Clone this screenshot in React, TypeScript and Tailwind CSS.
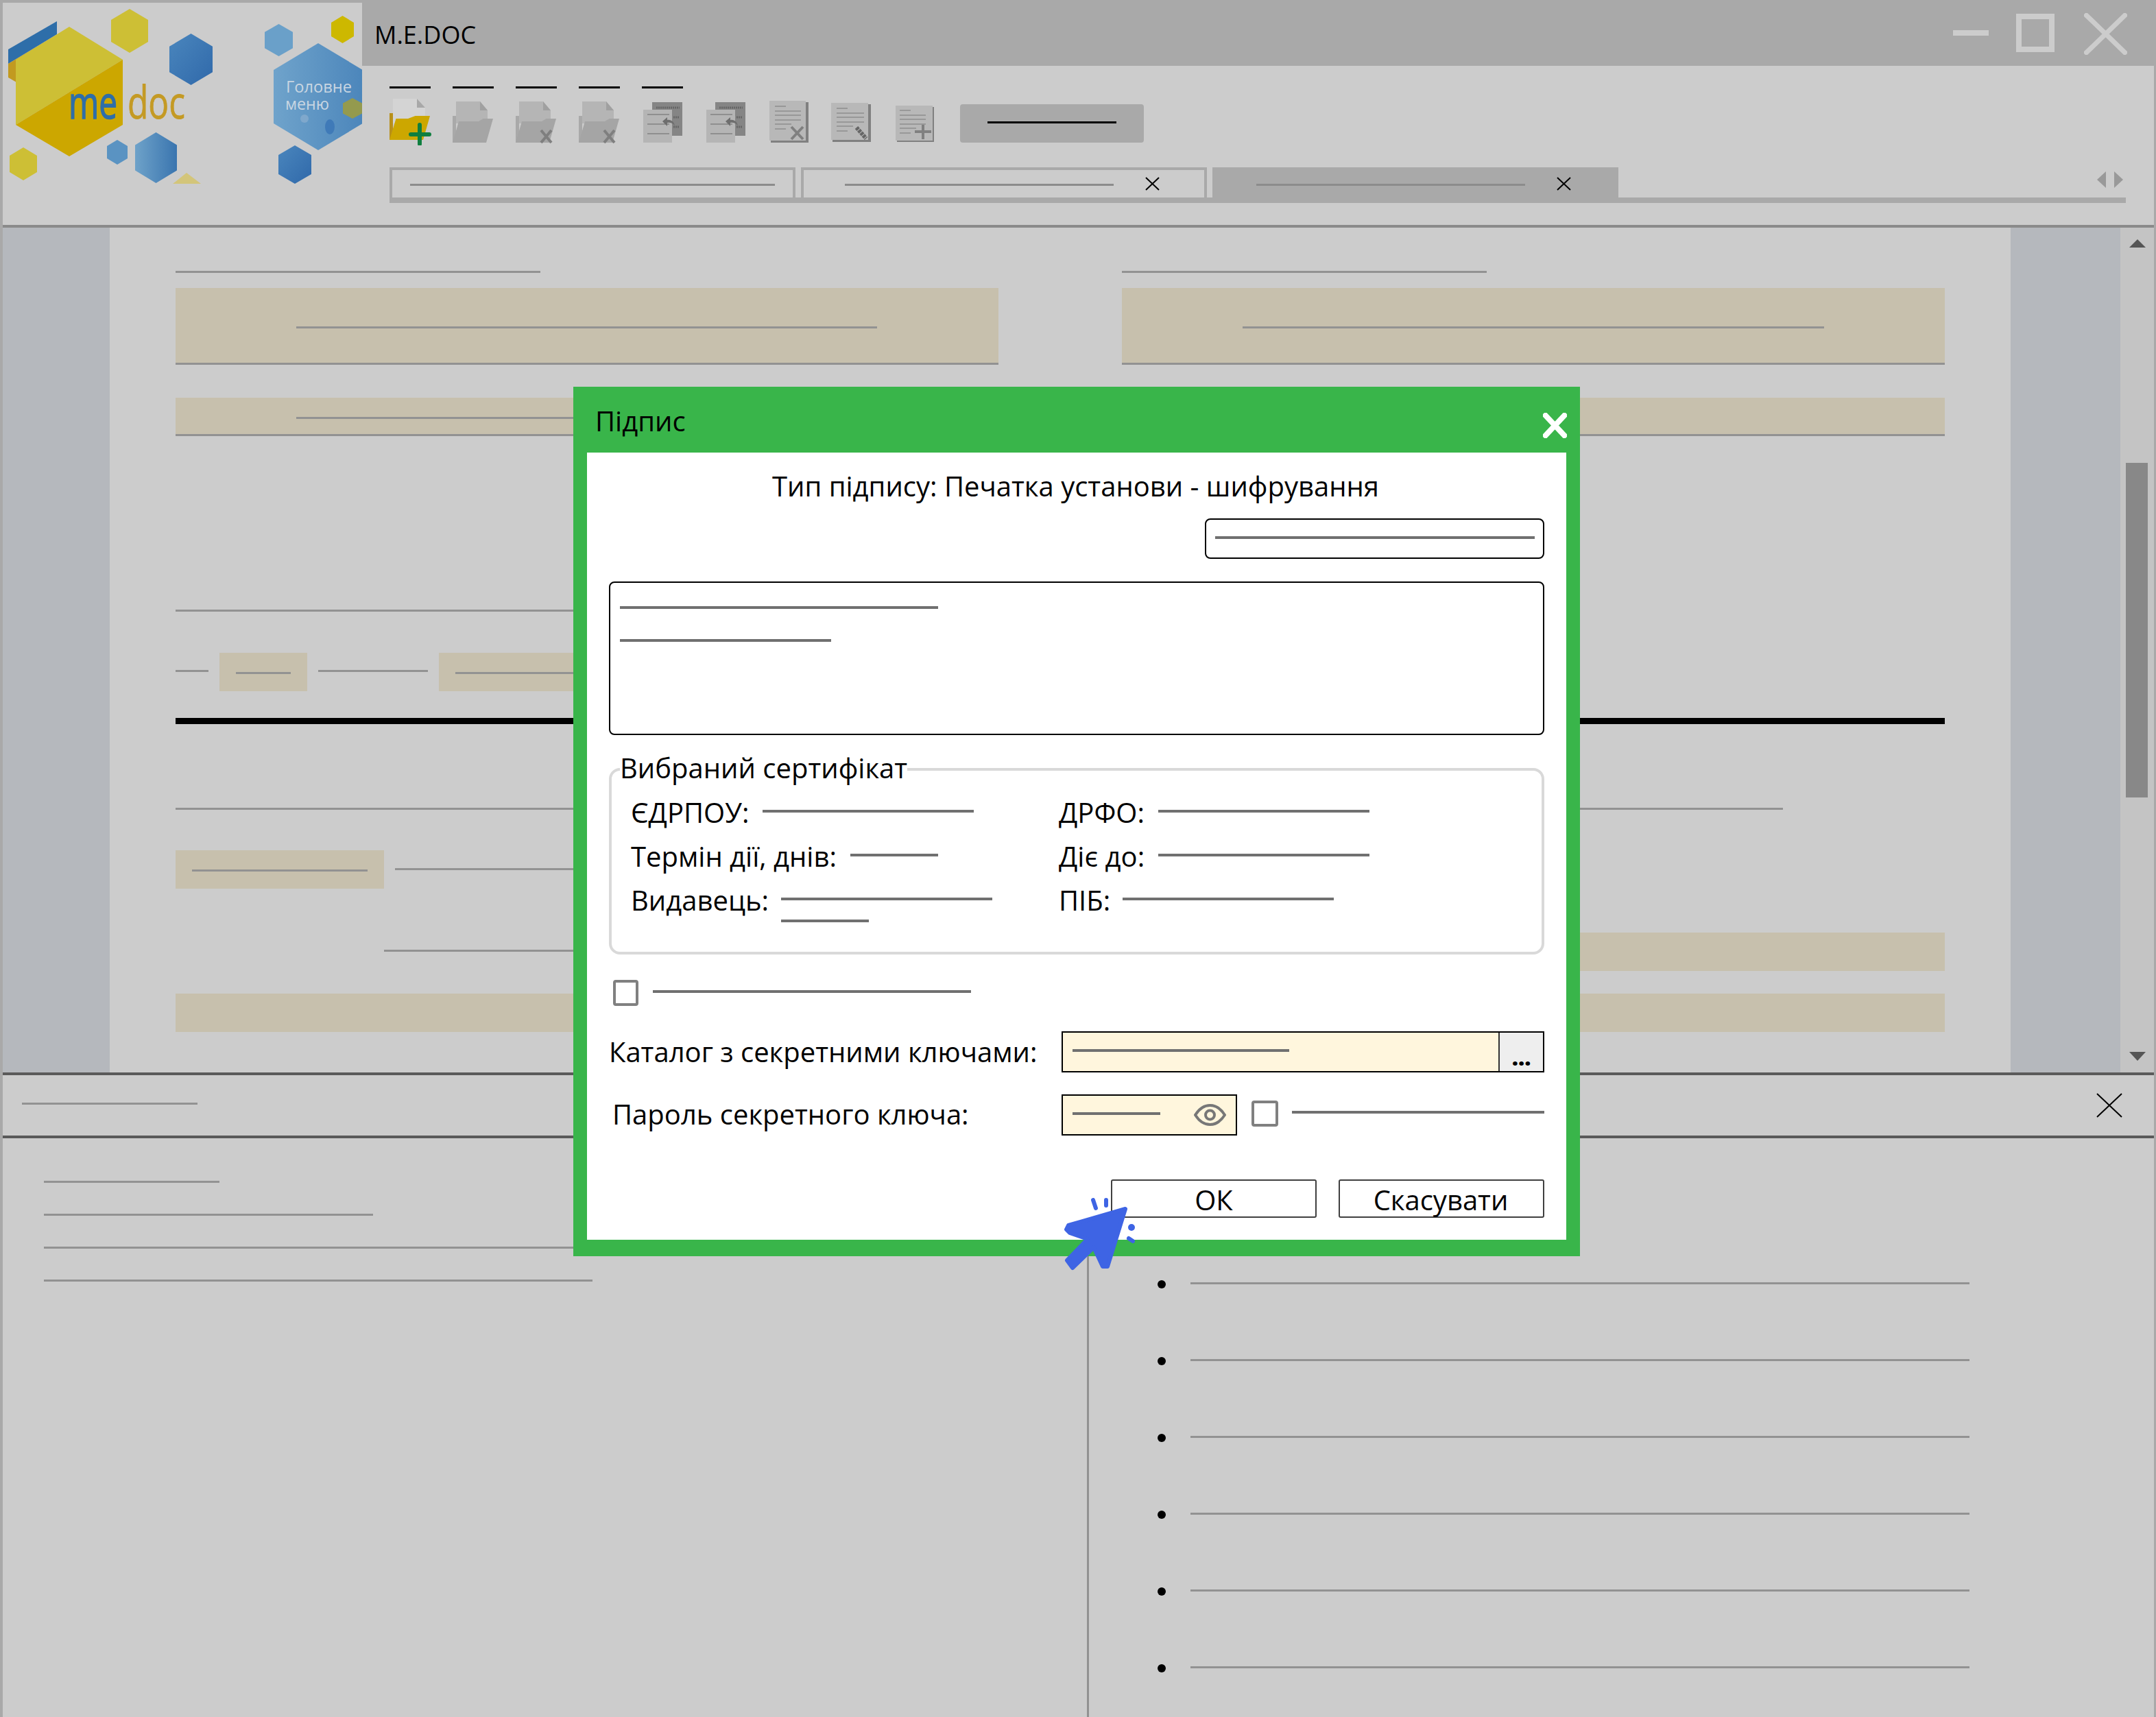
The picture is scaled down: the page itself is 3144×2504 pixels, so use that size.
import React from 'react';

function DocLine({ className = '' }: { className?: string }) {
  return <div className={`h-[3px] shrink-0 bg-[#929292] ${className}`} />;
}

function FormLine({ className = '' }: { className?: string }) {
  return <div className={`h-[4px] shrink-0 bg-[#707070] ${className}`} />;
}

function Cross({ width, height, color, stroke, className = '' }: { width: number; height: number; color: string; stroke: number; className?: string }) {
  return (
    <svg width={width} height={height} viewBox={`0 0 ${width} ${height}`} className={`shrink-0 ${className}`}>
      <path d={`M1 1 L${width - 1} ${height - 1} M${width - 1} 1 L1 ${height - 1}`} stroke={color} strokeWidth={stroke} fill="none" />
    </svg>
  );
}

function Hex({ x1, x2, y1, y2, fill }: { x1: number; x2: number; y1: number; y2: number; fill: string }) {
  const mx = (x1 + x2) / 2;
  const d = (y2 - y1) / 4;
  return <polygon points={`${mx},${y1} ${x2},${y1 + d} ${x2},${y2 - d} ${mx},${y2} ${x1},${y2 - d} ${x1},${y1 + d}`} fill={fill} />;
}

function Logo() {
  return (
    <svg width="524" height="324" viewBox="4 4 524 324" className="block">
      <defs>
        <linearGradient id="blueA" x1="0" y1="0" x2="1" y2="1">
          <stop offset="0" stopColor="#4a86bd" />
          <stop offset="1" stopColor="#3069aa" />
        </linearGradient>
        <linearGradient id="blueB" x1="0" y1="0" x2="1" y2="0">
          <stop offset="0" stopColor="#6ea2c9" />
          <stop offset="1" stopColor="#3a75af" />
        </linearGradient>
        <linearGradient id="blueC" x1="0" y1="0" x2="1" y2="0">
          <stop offset="0" stopColor="#6fa3cb" />
          <stop offset="1" stopColor="#4c86bb" />
        </linearGradient>
      </defs>
      <polygon points="83,31 83,50 12,93 12,72" fill="#2e6ea9" />
      <polygon points="84,50 84,72 24,106 24,120 12,113 12,93" fill="#c29a20" />
      <polygon points="101,39 179,87 23,182 23,87" fill="#cdbf35" />
      <polygon points="179,87 179,182 101,228 23,182" fill="#cca700" />
      <Hex x1={162} x2={216} y1={13} y2={77} fill="#cdbf35" />
      <Hex x1={247} x2={310} y1={49} y2={124} fill="url(#blueA)" />
      <Hex x1={14} x2={54} y1={215} y2={263} fill="#cdbf35" />
      <Hex x1={156} x2={186} y1={204} y2={240} fill="#5a93c2" />
      <Hex x1={197} x2={258} y1={193} y2={267} fill="url(#blueB)" />
      <polygon points="252,268 272,252 293,268" fill="#d3c57a" />
      <text x="100" y="173" fontSize="65" textLength="71" lengthAdjust="spacingAndGlyphs" fill="#2e6ea9" stroke="#2e6ea9" strokeWidth="1.5">me</text>
      <text x="186" y="173" fontSize="65" textLength="84" lengthAdjust="spacingAndGlyphs" fill="#c49a24" stroke="#c49a24" strokeWidth="0.8">doc</text>
      <Hex x1={386} x2={427} y1={35} y2={82} fill="#6aa0c9" />
      <Hex x1={483} x2={516} y1={23} y2={63} fill="#cdb800" />
      <Hex x1={399} x2={529} y1={63} y2={219} fill="url(#blueC)" />
      <Hex x1={500} x2={528} y1={143} y2={173} fill="#949a4e" />
      <circle cx="444" cy="173" r="6" fill="#7fa8cc" />
      <ellipse cx="481" cy="185" rx="7" ry="11" fill="#3f7ab8" />
      <Hex x1={406} x2={454} y1={212} y2={268} fill="url(#blueA)" />
      <text x="417" y="135" fontSize="24" textLength="96" lengthAdjust="spacingAndGlyphs" fill="#c9d6e2">Головне</text>
      <text x="416" y="160" fontSize="24" textLength="64" lengthAdjust="spacingAndGlyphs" fill="#c9d6e2">меню</text>
    </svg>
  );
}

function FolderNew() {
  return (
    <svg width="92" height="72" viewBox="0 0 92 72" className="shrink-0">
      <path d="M5 4 H40 L52 17 V40 H5 Z" fill="#d4d4d4" />
      <path d="M40 4 L52 17 H40 Z" fill="#a8a8a8" />
      <rect x="0" y="25" width="5" height="39" fill="#b8901a" />
      <polygon points="9.5,33 27,33 37.6,29 59,29 49,64 0,64" fill="#cca700" />
      <path d="M44 42 V70 M31 56 H58" stroke="#0f7f3f" strokeWidth="6" strokeLinecap="round" fill="none" />
    </svg>
  );
}

function FolderGray({ cross = false }: { cross?: boolean }) {
  return (
    <svg width="92" height="72" viewBox="0 0 92 72" className="shrink-0">
      <path d="M5 8 H40 L51 21 V40 H5 Z" fill="#b5b5b5" />
      <path d="M40 8 L51 21 H40 Z" fill="#a0a0a0" />
      <rect x="0" y="29" width="5" height="39" fill="#a9a9a9" />
      <polygon points="9,37 38,37 44.6,33 59,33 49,68 0,68" fill="#a5a5a5" />
      {cross && <path d="M37 50 L52 68 M52 50 L37 68" stroke="#7f7f7f" strokeWidth="4" fill="none" />}
    </svg>
  );
}

function PagesBack() {
  return (
    <svg width="92" height="72" viewBox="0 0 92 72" className="shrink-0">
      <rect x="15" y="9" width="44" height="49" fill="#858585" />
      <path d="M21 17 H55 M46 31 H55 M46 45 H55" stroke="#666666" strokeWidth="3" strokeDasharray="2 1" fill="none" />
      <rect x="2" y="20" width="42" height="48" fill="#b5b5b5" />
      <path d="M8 27 H40 M8 41 H40 M8 55 H40" stroke="#8f8f8f" strokeWidth="2" fill="none" />
      <path d="M30 37 L37 31 L37 35 C43 34 47 38 48 43 C44 39 41 38 37 39 L37 44 Z" fill="#6e6e6e" />
    </svg>
  );
}

function SheetLines({ x, y, w }: { x: number; y: number; w: number }) {
  return (
    <path
      d={`M${x} ${y} H${x + 16} M${x} ${y + 7} H${x + w} M${x} ${y + 13} H${x + w} M${x} ${y + 20} H${x + w} M${x} ${y + 26} H${x + 24} M${x} ${y + 33} H${x + 16}`}
      stroke="#989898"
      strokeWidth="2"
      fill="none"
    />
  );
}

function SheetCross() {
  return (
    <svg width="90" height="72" viewBox="0 0 90 72" className="shrink-0">
      <rect x="4" y="9" width="55" height="59" fill="#808080" />
      <rect x="2" y="7" width="53" height="58" fill="#b8b8b8" />
      <SheetLines x={10} y={15} w={38} />
      <path d="M34 45 L51 63 M51 45 L34 63" stroke="#808080" strokeWidth="4" fill="none" />
    </svg>
  );
}

function SheetPencil() {
  return (
    <svg width="92" height="72" viewBox="0 0 92 72" className="shrink-0">
      <rect x="2" y="12" width="56" height="55" fill="#808080" />
      <rect x="0" y="10" width="54" height="54" fill="#b8b8b8" />
      <SheetLines x={8} y={18} w={40} />
      <path d="M37 46 L51 62" stroke="#666666" strokeWidth="6" strokeDasharray="4 1" fill="none" />
    </svg>
  );
}

function SheetPlus() {
  return (
    <svg width="92" height="72" viewBox="0 0 92 72" className="shrink-0">
      <rect x="4" y="16" width="54" height="51" fill="#808080" />
      <rect x="2" y="14" width="54" height="51" fill="#b8b8b8" />
      <SheetLines x={8} y={21} w={38} />
      <path d="M42 42 V63 M30 52 H54" stroke="#808080" strokeWidth="4" fill="none" />
    </svg>
  );
}

function EyeIcon() {
  return (
    <svg width="47" height="32" viewBox="0 0 47 32" className="shrink-0 self-center">
      <path d="M2 16 C9 5 16 2 23.5 2 S38 5 45 16 C38 27 31 30 23.5 30 S9 27 2 16 Z" stroke="#777777" strokeWidth="4" fill="none" />
      <circle cx="23.5" cy="16" r="6.5" stroke="#777777" strokeWidth="4" fill="none" />
    </svg>
  );
}

function ClickCursor() {
  return (
    <svg width="110" height="108" viewBox="0 0 110 108" className="absolute left-[1551px] top-[1747px]">
      <polygon
        points="90,16 7,40 4,46 9,51 35,60 5,91 13,102 44,72 57,100 64,100"
        fill="#3e64e4"
        stroke="#3e64e4"
        strokeWidth="6"
        strokeLinejoin="round"
      />
      <path d="M43 3 L47 15 M62 3 V11 M95 59 L101 63" stroke="#3e64e4" strokeWidth="6" strokeLinecap="round" fill="none" />
      <circle cx="99" cy="43" r="5" fill="#3e64e4" />
    </svg>
  );
}

function Tab({ active = false, closable = true, lineClass }: { active?: boolean; closable?: boolean; lineClass: string }) {
  return (
    <div className={`flex h-[44px] w-[592px] items-start ${active ? 'bg-[#a9a9a9]' : 'border-x-4 border-t-4 border-[#a9a9a9]'}`}>
      <div className={`h-[3px] bg-[#8c8c8c] ${lineClass}`} />
      {closable && <Cross width={21} height={20} color="#000000" stroke={2} className={active ? 'ml-[46px] mt-[14px]' : 'ml-[46px] mt-[10px]'} />}
    </div>
  );
}

function Titlebar() {
  return (
    <div className="flex h-[96px] shrink-0 items-start justify-between">
      <div className="pl-[18px] pt-[26px] text-[36px] leading-[50px] text-black">M.E.DOC</div>
      <div className="flex items-start pr-[39px] pt-[19px]">
        <div className="mt-[25px] h-[8px] w-[52px] bg-[#cccccc]" />
        <div className="ml-[40px] mt-[1px] h-[56px] w-[56px] border-[8px] border-[#cccccc]" />
        <Cross width={63} height={61} color="#cccccc" stroke={7} className="ml-[43px]" />
      </div>
    </div>
  );
}

function Toolbar() {
  return (
    <div className="flex flex-1 flex-col bg-[#cccccc] pl-[40px]">
      <div className="flex gap-[32px] pt-[30px]">
        <div className="h-[3px] w-[60px] bg-black" />
        <div className="h-[3px] w-[60px] bg-black" />
        <div className="h-[3px] w-[60px] bg-black" />
        <div className="h-[3px] w-[60px] bg-black" />
        <div className="h-[3px] w-[60px] bg-black" />
      </div>
      <div className="mt-[11px] flex h-[72px] items-start">
        <FolderNew />
        <FolderGray />
        <FolderGray cross />
        <FolderGray cross />
        <PagesBack />
        <PagesBack />
        <div className="w-[92px]"><SheetCross /></div>
        <SheetPencil />
        <SheetPlus />
        <div className="ml-[4px] mt-[12px] flex h-[56px] w-[268px] items-center justify-center rounded-[4px] bg-[#a9a9a9]">
          <div className="mb-[3px] h-[3px] w-[188px] bg-black" />
        </div>
      </div>
      <div className="mt-[32px] flex h-[44px] w-[2532px] gap-[8px]">
        <Tab closable={false} lineClass="ml-[26px] mt-[20px] w-[532px]" />
        <Tab lineClass="ml-[60px] mt-[20px] w-[392px]" />
        <Tab active lineClass="ml-[64px] mt-[24px] w-[392px]" />
        <svg width="38" height="24" viewBox="0 0 38 24" className="ml-auto mr-[4px] mt-[6px]">
          <polygon points="13,0 0,12 13,24" fill="#999999" />
          <polygon points="25,0 38,12 25,24" fill="#999999" />
        </svg>
      </div>
      <div className="h-[8px] w-[2532px] bg-[#a9a9a9]" />
    </div>
  );
}

function TanRow({ className = '', children }: { className?: string; children?: React.ReactNode }) {
  return <div className={`shrink-0 bg-[#c7c0ad] ${className}`}>{children}</div>;
}

function Document() {
  return (
    <div className="flex h-[1236px] shrink-0 overflow-hidden border-b-4 border-[#5a5a5a]">
      <div className="w-[156px] bg-[#b5b8bd]" />
      <div className="flex-1 bg-[#cccccc] px-[96px] pt-[63px]">
        <div className="flex gap-[180px]">
          <div className="w-[1200px]">
            <DocLine className="w-[532px]" />
            <TanRow className="mt-[22px] h-[112px] border-b-[3px] border-[#929292] pl-[176px] pt-[56px]">
              <DocLine className="w-[847px]" />
            </TanRow>
            <TanRow className="mt-[48px] h-[56px] border-b-[3px] border-[#929292] pl-[176px] pt-[28px]">
              <DocLine className="w-[847px]" />
            </TanRow>
          </div>
          <div className="w-[1200px]">
            <DocLine className="w-[532px]" />
            <TanRow className="mt-[22px] h-[112px] border-b-[3px] border-[#929292] pl-[176px] pt-[56px]">
              <DocLine className="w-[848px]" />
            </TanRow>
            <TanRow className="mt-[48px] h-[56px] border-b-[3px] border-[#929292]" />
          </div>
        </div>
        <DocLine className="mt-[253px] w-[1200px]" />
        <div className="mt-[60px] flex h-[56px] items-start">
          <DocLine className="mt-[25px] w-[48px]" />
          <TanRow className="ml-[16px] h-[56px] w-[128px] pl-[24px] pt-[28px]"><DocLine className="w-[80px]" /></TanRow>
          <DocLine className="ml-[16px] mt-[25px] w-[160px]" />
          <TanRow className="ml-[16px] h-[56px] w-[800px] pl-[24px] pt-[28px]"><DocLine className="w-[700px]" /></TanRow>
        </div>
        <div className="mt-[39px] h-[9px] w-full bg-black" />
        <DocLine className="mt-[122px] w-[2344px]" />
        <div className="mt-[59px] flex h-[56px] items-start">
          <TanRow className="h-[56px] w-[304px] pl-[24px] pt-[28px]"><DocLine className="w-[256px]" /></TanRow>
          <DocLine className="ml-[16px] mt-[26px] w-[800px]" />
        </div>
        <div className="mt-[64px] flex h-[56px] items-start justify-between">
          <DocLine className="ml-[304px] mt-[25px] w-[400px]" />
          <TanRow className="h-[56px] w-[1000px]" />
        </div>
        <TanRow className="mt-[33px] h-[56px] w-full" />
      </div>
      <div className="w-[160px] bg-[#b5b8bd]" />
      <div className="relative flex w-[49px] flex-col items-center bg-[#c4c4c4]">
        <svg width="24" height="12" viewBox="0 0 24 12" className="mt-[17px]"><polygon points="12,0 24,12 0,12" fill="#555555" /></svg>
        <div className="ml-[-2px] mt-[314px] h-[488px] w-[32px] bg-[#888888]" />
        <svg width="24" height="13" viewBox="0 0 24 13" className="mt-[371px]"><polygon points="0,0 24,0 12,13" fill="#555555" /></svg>
      </div>
    </div>
  );
}

function BottomPanel() {
  return (
    <div className="flex flex-1 flex-col bg-[#cccccc]">
      <div className="flex h-[92px] shrink-0 items-start justify-between border-b-4 border-[#5a5a5a] pl-[28px] pr-[46px]">
        <DocLine className="mt-[40px] w-[256px]" />
        <Cross width={38} height={36} color="#000000" stroke={2} className="mt-[26px]" />
      </div>
      <div className="flex flex-1">
        <div className="flex w-[1581px] flex-col gap-[45px] pl-[60px] pt-[62px]">
          <DocLine className="w-[256px]" />
          <DocLine className="w-[480px]" />
          <DocLine className="w-[800px]" />
          <DocLine className="w-[800px]" />
        </div>
        <div className="flex flex-1 flex-col border-l-[3px] border-[#929292] pl-[100px] pt-[207px]">
          {[0, 1, 2, 3, 4, 5].map(i => (
            <div key={i} className="flex h-[112px] items-start">
              <div className="h-[12px] w-[12px] rounded-full bg-black" />
              <DocLine className="ml-[36px] mt-[3px] w-[1136px]" />
            </div>
          ))}
        </div>
      </div>
    </div>
  );
}

function CertRow({ label, gap = 'gap-[20px]', children }: { label: string; gap?: string; children: React.ReactNode }) {
  return (
    <div className={`flex h-[56px] items-start ${gap}`}>
      <span className="whitespace-nowrap">{label}</span>
      {children}
    </div>
  );
}

function SignDialog() {
  return (
    <div className="absolute left-[836px] top-[564px] flex h-[1268px] w-[1468px] flex-col bg-[#39b54a] px-[20px] pb-[24px] text-[40px] leading-[56px] text-black">
      <div className="flex h-[96px] shrink-0 items-start justify-between">
        <span className="mt-[22px] pl-[12px]">Підпис</span>
        <Cross width={35} height={37} color="#ffffff" stroke={8} className="mr-[-1px] mt-[38px]" />
      </div>
      <div className="flex flex-1 flex-col bg-white pl-[32px] pr-[32px] pt-[21px]">
        <div className="h-[56px] pr-[3px] text-center">Тип підпису: Печатка установи - шифрування</div>
        <div className="mt-[19px] flex h-[59px] w-[495px] items-center self-end rounded-[8px] border-2 border-black pl-[13px] pr-[12px]">
          <FormLine className="mb-[3px] w-full" />
        </div>
        <div className="mt-[33px] flex h-[224px] flex-col rounded-[8px] border-2 border-black pl-[14px] pt-[34px]">
          <FormLine className="w-[464px]" />
          <FormLine className="mt-[44px] w-[308px]" />
        </div>
        <fieldset className="mt-[20px] h-[300px] rounded-[16px] border-4 border-[#d9d9d9] pl-[28px]">
          <legend className="ml-[-16px] pb-[4px]">Вибраний сертифікат</legend>
          <div className="flex pt-[5px]">
            <div className="flex w-[624px] flex-col gap-[8px]">
              <CertRow label="ЄДРПОУ:"><FormLine className="mt-[24px] w-[308px]" /></CertRow>
              <CertRow label="Термін дії, днів:"><FormLine className="mt-[24px] w-[128px]" /></CertRow>
              <CertRow label="Видавець:" gap="gap-[18px]">
                <div className="flex flex-col pt-[24px]">
                  <FormLine className="w-[308px]" />
                  <FormLine className="mt-[28px] w-[128px]" />
                </div>
              </CertRow>
            </div>
            <div className="flex flex-col gap-[8px]">
              <CertRow label="ДРФО:"><FormLine className="mt-[24px] w-[308px]" /></CertRow>
              <CertRow label="Діє до:"><FormLine className="mt-[24px] w-[308px]" /></CertRow>
              <CertRow label="ПІБ:" gap="gap-[18px]"><FormLine className="mt-[24px] w-[308px]" /></CertRow>
            </div>
          </div>
        </fieldset>
        <div className="ml-[6px] mt-[37px] flex items-start">
          <div className="h-[38px] w-[37px] rounded-[4px] border-4 border-[#808080]" />
          <FormLine className="ml-[21px] mt-[15px] w-[464px]" />
        </div>
        <div className="mt-[37px] flex h-[60px] items-start">
          <span className="mt-[2px] w-[660px] whitespace-nowrap">Каталог з секретними ключами:</span>
          <div className="flex h-[60px] flex-1 border-2 border-black bg-[#fff6dd]">
            <div className="flex-1 pl-[14px] pt-[24px]"><FormLine className="w-[316px]" /></div>
            <div className="flex w-[65px] justify-center border-l-2 border-[#333333] bg-[#eeeeee] pt-[14px] text-[32px] font-extrabold leading-[44px]">...</div>
          </div>
        </div>
        <div className="mt-[32px] flex h-[60px] items-start">
          <span className="ml-[5px] mt-[1px] w-[655px] whitespace-nowrap">Пароль секретного ключа:</span>
          <div className="flex h-[60px] w-[256px] justify-between border-2 border-black bg-[#fff6dd] pl-[14px] pr-[14px]">
            <FormLine className="mt-[24px] w-[128px]" />
            <EyeIcon />
          </div>
          <div className="ml-[21px] mt-[9px] h-[38px] w-[39px] rounded-[4px] border-4 border-[#808080]" />
          <FormLine className="ml-[20px] mt-[24px] flex-1" />
        </div>
        <div className="mt-[64px] flex justify-end gap-[32px]">
          <div className="h-[56px] w-[300px] rounded-[3px] border-2 border-[#404040] text-center leading-[55px]">ОК</div>
          <div className="h-[56px] w-[300px] rounded-[3px] border-2 border-[#404040] pr-[2px] text-center leading-[55px]">Скасувати</div>
        </div>
      </div>
    </div>
  );
}

export default function App() {
  return (
    <div className="relative flex h-[2504px] w-[3144px] flex-col overflow-hidden bg-[#a9a9a9] pb-[4px] pl-[4px] pr-[3px] [font-family:'Open_Sans',sans-serif]">
      <div className="flex h-[332px] shrink-0 border-b-4 border-[#8a8a8a]">
        <div className="mt-[4px] w-[524px] shrink-0 bg-[#cccccc]"><Logo /></div>
        <div className="flex flex-1 flex-col">
          <Titlebar />
          <Toolbar />
        </div>
      </div>
      <Document />
      <BottomPanel />
      <SignDialog />
      <ClickCursor />
    </div>
  );
}
